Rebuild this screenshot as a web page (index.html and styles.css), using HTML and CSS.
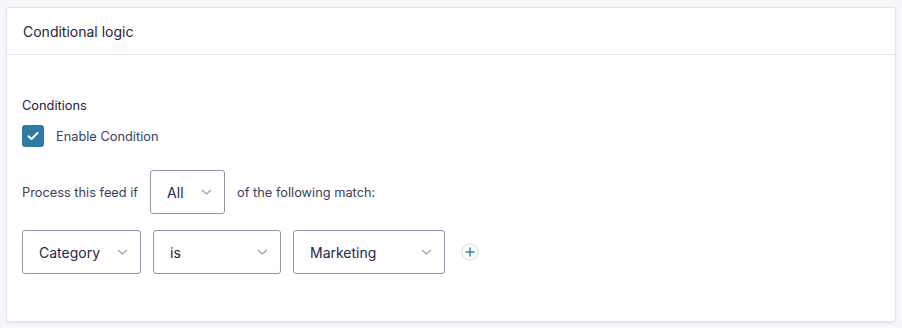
FILE: index.html
```html
<!DOCTYPE html>
<html>
<head>
<meta charset="utf-8">
<link rel="stylesheet" href="styles.css">
</head>
<body>
<div class="card">
  <div class="card-header">Conditional logic</div>
  <div class="card-body">
    <div class="section-label">Conditions</div>
    <label class="check-row">
      <span class="checkbox">
        <svg width="12" height="10" viewBox="0 0 12 10"><path d="M1.5 5.2 L4.5 8 L10.5 2" fill="none" stroke="#fff" stroke-width="2" stroke-linecap="round" stroke-linejoin="round"/></svg>
      </span>
      <span>Enable Condition</span>
    </label>
    <div class="process-row">
      <span>Process this feed if</span>
      <div class="select sel-all"><span>All</span><svg class="chev" width="11" height="6" viewBox="0 0 11 6"><path d="M1 1 L5.5 5 L10 1" fill="none" stroke="#9a9cbc" stroke-width="1.3"/></svg></div>
      <span>of the following match:</span>
    </div>
    <div class="rule-row">
      <div class="select sel-cat"><span>Category</span><svg class="chev" width="11" height="6" viewBox="0 0 11 6"><path d="M1 1 L5.5 5 L10 1" fill="none" stroke="#9a9cbc" stroke-width="1.3"/></svg></div>
      <div class="select sel-is"><span>is</span><svg class="chev" width="11" height="6" viewBox="0 0 11 6"><path d="M1 1 L5.5 5 L10 1" fill="none" stroke="#9a9cbc" stroke-width="1.3"/></svg></div>
      <div class="select sel-val"><span>Marketing</span><svg class="chev" width="11" height="6" viewBox="0 0 11 6"><path d="M1 1 L5.5 5 L10 1" fill="none" stroke="#9a9cbc" stroke-width="1.3"/></svg></div>
      <button class="add-btn" aria-label="Add">
        <svg width="18" height="18" viewBox="0 0 18 18"><circle cx="9" cy="9" r="8.2" fill="#fff" stroke="#d5d6e2" stroke-width="1"/><path d="M9 5 V13 M5 9 H13" stroke="#3a83ad" stroke-width="1.5" stroke-linecap="round"/></svg>
      </button>
    </div>
  </div>
</div>
</body>
</html>
```

FILE: styles.css
```css
html, body {
  margin: 0;
  padding: 0;
}
body {
  background: #f5f7fb;
  font-family: Inter, "Noto Sans", sans-serif;
  color: #242748;
  font-size: 13px;
  padding: 7px 6px 7px 6px;
}
.card {
  width: 888px;
  background: #fff;
  border: 1px solid #e3e4eb;
  border-radius: 3px;
  box-shadow: 0 1px 3px rgba(40, 44, 90, 0.08);
}
.card-header {
  height: 47px;
  box-sizing: border-box;
  padding: 0 16px;
  display: flex;
  align-items: center;
  font-size: 14px;
  font-weight: 400;
  color: #1f2240;
  border-bottom: 1px solid #e6e7ee;
}
.card-body {
  padding: 43px 15px 47px;
}
.section-label {
  font-size: 12.8px;
  font-weight: 400;
  line-height: 16px;
  color: #1f2240;
}
.check-row {
  display: flex;
  align-items: center;
  gap: 12px;
  margin-top: 11px;
  font-size: 12.8px;
  color: #3b3e5c;
}
.checkbox {
  width: 22px;
  height: 22px;
  border-radius: 3px;
  background: #2e7ba6;
  display: flex;
  align-items: center;
  justify-content: center;
}
.process-row {
  display: flex;
  align-items: center;
  gap: 12px;
  margin-top: 23px;
  font-size: 12.8px;
  color: #3b3e5c;
}
.select {
  box-sizing: border-box;
  height: 44px;
  border: 1px solid #9093b3;
  border-radius: 3px;
  display: flex;
  align-items: center;
  justify-content: space-between;
  padding: 0 12px 0 16px;
  font-size: 14px;
  color: #242748;
  background: #fff;
}
.sel-all { width: 75px; }
.sel-cat { width: 119px; }
.sel-is { width: 128px; }
.sel-val { width: 152px; }
.rule-row {
  display: flex;
  align-items: center;
  gap: 12px;
  margin-top: 16px;
}
.add-btn {
  border: 0;
  background: transparent;
  padding: 0;
  margin-left: 4px;
  width: 18px;
  height: 18px;
  display: flex;
}
```
